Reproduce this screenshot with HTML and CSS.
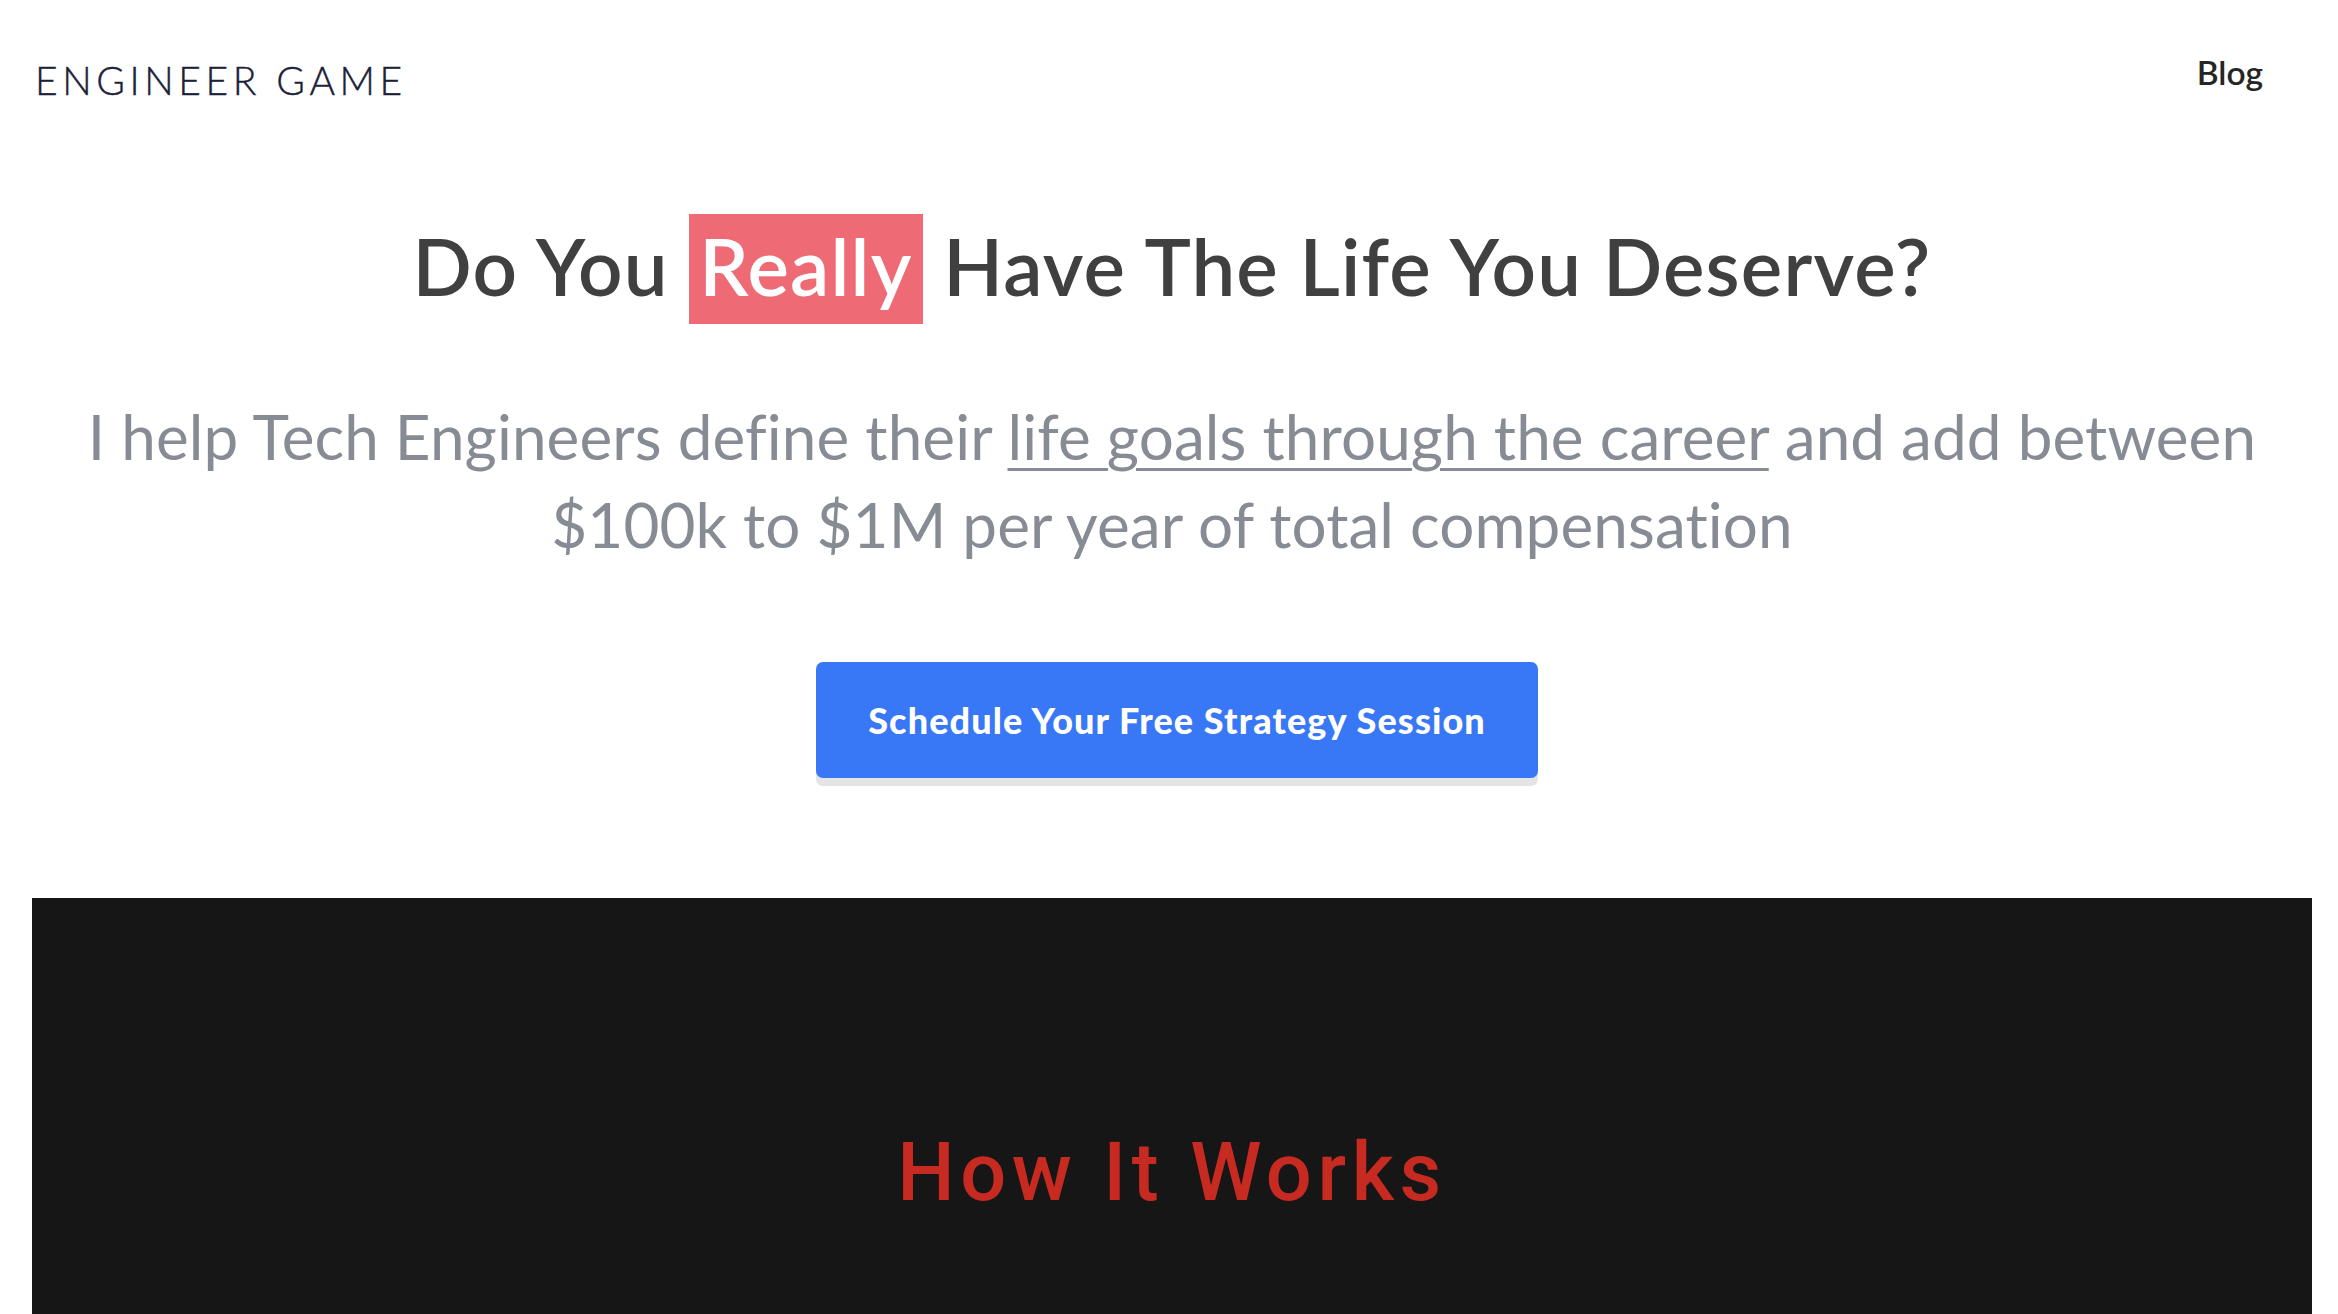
FILE: index.html
```html
<!DOCTYPE html>
<html lang="en">
<head>
<meta charset="utf-8">
<title>Engineer Game</title>
<link rel="stylesheet" href="styles.css">
</head>
<body>
<header class="topbar">
  <a class="logo" href="#">ENGINEER GAME</a>
  <nav class="nav">
    <a class="nav-link" href="#">Blog</a>
  </nav>
</header>
<main class="hero">
  <h1 class="hero-title">Do You <span class="highlight">Really</span> Have The Life You Deserve?</h1>
  <p class="hero-sub">I help Tech Engineers define their <a class="hero-link" href="#">life goals through the career</a> and add between $100k to $1M per year of total compensation</p>
  <a class="cta" href="#">Schedule Your Free Strategy Session</a>
</main>
<section class="video">
  <h2 class="video-title">How It Works</h2>
</section>
</body>
</html>
```
FILE: styles.css
```css
html, body {
  margin: 0;
  padding: 0;
  background: #ffffff;
}
body {
  font-family: "Lato", "Noto Sans", sans-serif;
  overflow: hidden;
}
a {
  text-decoration: none;
  color: inherit;
}
.topbar {
  display: flex;
  justify-content: space-between;
  align-items: flex-start;
  padding: 56px 75px 0 35px;
}
.logo {
  margin-top: 5px;
  font-size: 39px;
  line-height: 1;
  font-weight: 300;
  letter-spacing: 4.6px;
  color: #1b2138;
  -webkit-text-stroke: 0.4px #1b2138;
}
.nav-link {
  display: block;
  font-size: 33.5px;
  line-height: 1;
  font-weight: 600;
  color: #262626;
}
.hero {
  display: flex;
  flex-direction: column;
  align-items: center;
  text-align: center;
  padding: 0 50px 0 56px;
}
.hero-title {
  margin: 120px 0 0;
  font-size: 78px;
  line-height: 1.2;
  font-weight: 600;
  letter-spacing: 1.2px;
  color: #404040;
}
.highlight {
  background: #ee6b76;
  color: #ffffff;
  padding: 5px 10px 11px;
}
.hero-sub {
  margin: 78px 0 0;
  font-size: 62px;
  line-height: 88px;
  font-weight: 400;
  letter-spacing: 0.1px;
  color: #868b94;
}
.hero-link {
  text-decoration: underline;
  text-decoration-thickness: 3px;
  text-underline-offset: 8px;
}
.cta {
  margin-top: 94px;
  margin-left: 10px;
  display: inline-block;
  padding: 40px 52px;
  font-size: 36px;
  line-height: 36px;
  font-weight: 900;
  letter-spacing: 1.1px;
  color: #ffffff;
  background: #3877f5;
  border-radius: 7px;
  box-shadow: 0 8px 0 #e4e4e4;
}
.video {
  margin: 120px 26px 0 32px;
  height: 700px;
  background: #161616;
  padding-top: 234px;
  box-sizing: border-box;
}
.video-title {
  margin: 0;
  text-align: center;
  font-family: "Roboto", "Noto Sans", sans-serif;
  font-size: 81px;
  line-height: 1;
  font-weight: 500;
  color: #c62a21;
  letter-spacing: 5.6px;
  filter: blur(0.5px);
}
```
